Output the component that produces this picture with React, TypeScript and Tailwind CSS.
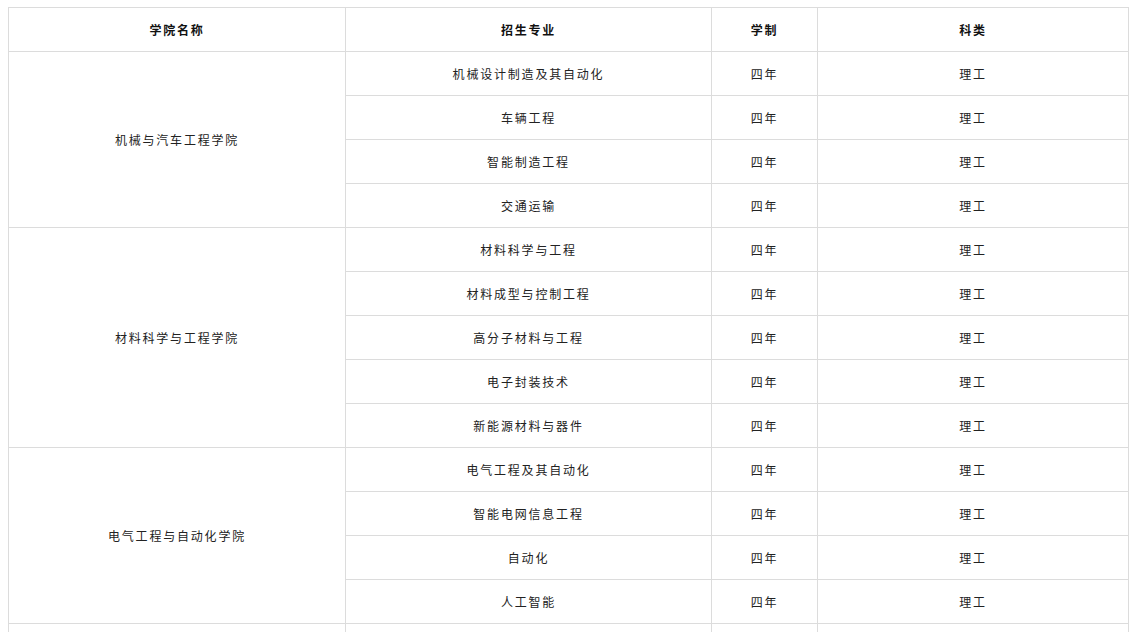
const groups = [
  {
    college: '机械与汽车工程学院',
    majors: ['机械设计制造及其自动化', '车辆工程', '智能制造工程', '交通运输'],
  },
  {
    college: '材料科学与工程学院',
    majors: ['材料科学与工程', '材料成型与控制工程', '高分子材料与工程', '电子封装技术', '新能源材料与器件'],
  },
  {
    college: '电气工程与自动化学院',
    majors: ['电气工程及其自动化', '智能电网信息工程', '自动化', '人工智能'],
  },
];

const cell = 'border border-[#dcdcdc] text-center align-middle h-[44px] p-0';

export default function App() {
  return (
    <div
      className="bg-white min-h-screen pt-[7px] pl-[8px] text-[12px] text-[#222] tracking-[1.8px]"
      style={{ fontFamily: '"Noto Sans CJK SC", "Noto Sans", sans-serif' }}
    >
      <table className="border-collapse table-fixed w-[1120px]">
        <colgroup>
          <col className="w-[337px]" />
          <col className="w-[366px]" />
          <col className="w-[106px]" />
          <col className="w-[311px]" />
        </colgroup>
        <thead>
          <tr>
            <th className={`${cell} font-bold text-[#111]`}>学院名称</th>
            <th className={`${cell} font-bold text-[#111]`}>招生专业</th>
            <th className={`${cell} font-bold text-[#111]`}>学制</th>
            <th className={`${cell} font-bold text-[#111]`}>科类</th>
          </tr>
        </thead>
        <tbody>
          {groups.map((g) =>
            g.majors.map((m, i) => (
              <tr key={g.college + m}>
                {i === 0 && (
                  <td className={cell} rowSpan={g.majors.length}>
                    {g.college}
                  </td>
                )}
                <td className={cell}>{m}</td>
                <td className={cell}>四年</td>
                <td className={cell}>理工</td>
              </tr>
            ))
          )}
          <tr>
            <td className={cell}></td>
            <td className={cell}></td>
            <td className={cell}></td>
            <td className={cell}></td>
          </tr>
        </tbody>
      </table>
    </div>
  );
}
